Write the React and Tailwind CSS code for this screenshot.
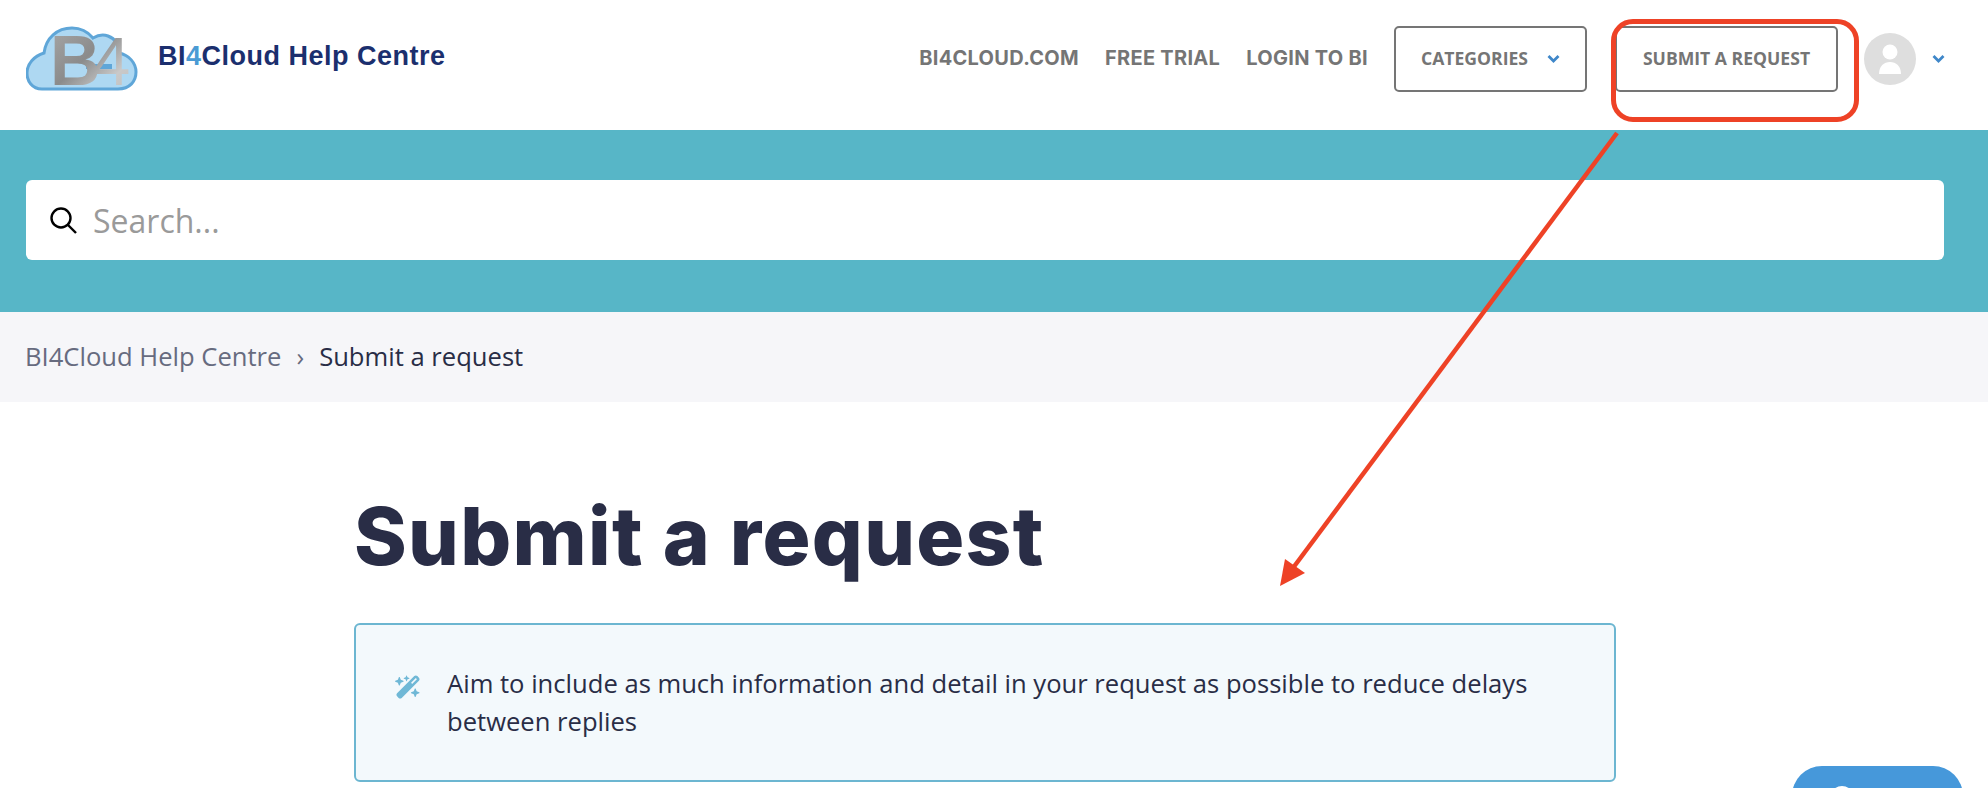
import React from 'react';
import { FaWandMagicSparkles } from 'react-icons/fa6';

const Chevron = () => (
  <svg width="13" height="10" viewBox="0 0 13 10" fill="none" className="shrink-0">
    <path d="M1.5 2 L6.5 7 L11.5 2" stroke="#3f87c9" strokeWidth="2.8" />
  </svg>
);

const Logo = () => (
  <svg width="112" height="90" viewBox="0 -13 112 90" className="shrink-0">
    <defs>
      <linearGradient id="metal" x1="0" y1="0" x2="1" y2="1">
        <stop offset="0" stopColor="#a9a9a9" />
        <stop offset="0.45" stopColor="#8b8b8b" />
        <stop offset="0.75" stopColor="#c9c9c9" />
        <stop offset="1" stopColor="#bdbdbd" />
      </linearGradient>
    </defs>
    <path
      d="M16 63 C6 63 1 55 1 47 C1 38 8 30 18 27 C20 12 31 2 46 2 C55 2 62 6 67 12 C72 9 77 8 82 10 C90 13 93 20 93 27 C103 29 110 37 110 46 C110 55 104 63 92 63 Z"
      fill="#aed8f2"
      stroke="#5fa6d8"
      strokeWidth="3"
    />
    <rect x="60" y="38" width="26" height="5" fill="#5fa6d8" />
    <text x="24" y="59" fontFamily="Liberation Sans, sans-serif" fontWeight="700" fontSize="70" fill="url(#metal)">
      B<tspan dx="-8" fontWeight="400" fontSize="68">4</tspan>
    </text>
  </svg>
);

const NavButton = ({ children, w }) => (
  <div className={`flex h-[66px] items-center justify-center gap-[19px] rounded-[5px] border-2 border-[#757575] text-[17.6px] font-bold text-[#757575] ${w}`}>
    {children}
  </div>
);

export default function App() {
  return (
    <div className="relative h-screen w-full overflow-hidden bg-white font-['Open_Sans',sans-serif] text-[#292d46]">
      {/* Header */}
      <header className="flex h-[130px] items-center pl-[26px] pr-[43px]">
        <div className="flex items-center gap-[20px] pb-[14px]">
          <Logo />
          <span className="mb-[4px] font-['Liberation_Sans',sans-serif] text-[27px] font-bold tracking-[0.5px] text-[#1b2f6e]">
            BI<span className="text-[#4a9bd4]">4</span>Cloud Help Centre
          </span>
        </div>
        <nav className="ml-auto flex items-center pb-[13px]">
          <div className="mb-[1px] mr-[26px] flex gap-[26px] font-['Inter',sans-serif] text-[20px] font-bold tracking-[0.3px] text-[#757575]">
            <span>BI4CLOUD.COM</span>
            <span>FREE TRIAL</span>
            <span>LOGIN TO BI</span>
          </div>
          <NavButton w="w-[193px]">
            <span>CATEGORIES</span>
            <Chevron />
          </NavButton>
          <div className="ml-[28px]">
            <NavButton w="w-[223px]">SUBMIT A REQUEST</NavButton>
          </div>
          <div className="ml-[26px] flex h-[52px] w-[52px] items-center justify-center rounded-full bg-[#dedede]">
            <svg width="24" height="32" viewBox="0 0 24 32" fill="white">
              <circle cx="12" cy="9" r="7.5" />
              <path d="M1 31 C1 23 6 19 12 19 C18 19 23 23 23 31 Z" />
            </svg>
          </div>
          <div className="ml-[16px]">
            <Chevron />
          </div>
        </nav>
      </header>

      {/* Search */}
      <section className="bg-[#57b6c7] pb-[52px] pl-[26px] pr-[44px] pt-[50px]">
        <div className="flex h-[80px] items-center gap-[16px] rounded-[6px] bg-white pl-[24px]">
          <svg width="27" height="27" viewBox="0 0 27 27" fill="none" stroke="black" strokeWidth="2.4">
            <circle cx="11" cy="11" r="9.5" />
            <path d="M18 18 L26 26" />
          </svg>
          <span className="mt-[2px] text-[32px] text-[#9a9a9a]">Search...</span>
        </div>
      </section>

      {/* Breadcrumb */}
      <div className="flex h-[90px] items-center gap-[15px] bg-[#f6f6f9] pl-[25px] text-[25.6px]">
        <span className="text-[#676b7f]">BI4Cloud Help Centre</span>
        <span className="text-[#676b7f]">›</span>
        <span>Submit a request</span>
      </div>

      {/* Main */}
      <main className="ml-[354px] w-[1262px]">
        <h1 className="mt-[88px] font-['Inter',sans-serif] text-[80px] font-extrabold leading-[92px] tracking-[1.3px]">Submit a request</h1>
        <div className="mt-[41px] flex h-[159px] gap-[26px] rounded-[6px] border-2 border-[#6cb6d1] bg-[#f3f9fc] pl-[39px] pr-[60px] pt-[40px]">
          <FaWandMagicSparkles className="mt-[9px] shrink-0 text-[26px] text-[#6fb8d6]" />
          <p className="text-[25.6px] leading-[38px]">
            Aim to include as much information and detail in your request as possible to reduce delays between replies
          </p>
        </div>
      </main>

      {/* Chat button */}
      <div className="absolute left-[1792px] top-[766px] h-[70px] w-[171px] rounded-[30px] bg-[#4698da]">
        <div className="absolute left-[38px] top-[20px] h-[24px] w-[24px] rounded-full bg-white" />
      </div>

      {/* Annotation */}
      <div className="absolute left-[1611px] top-[19px] h-[103px] w-[248px] rounded-[22px] border-[5px] border-[#ee4226]" />
      <svg className="absolute left-0 top-0" width="1988" height="788" fill="none">
        <path d="M1617 133 L1290 572" stroke="#ee4226" strokeWidth="4.5" />
        <path d="M1280 586 L1285 559 L1305 573 Z" fill="#ee4226" />
      </svg>
    </div>
  );
}
